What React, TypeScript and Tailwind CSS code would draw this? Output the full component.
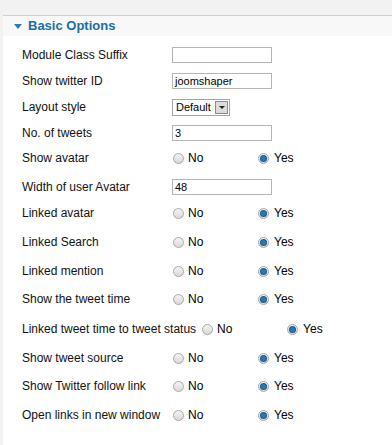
import React from "react";

type Row = {
  label: string;
  kind: "text" | "select" | "radio";
  value?: string;
  gap: string;
};

const rows: Row[] = [
  { label: "Module Class Suffix", kind: "text", value: "", gap: "mt-0" },
  { label: "Show twitter ID", kind: "text", value: "joomshaper", gap: "mt-[10px]" },
  { label: "Layout style", kind: "select", gap: "mt-[10px]" },
  { label: "No. of tweets", kind: "text", value: "3", gap: "mt-[10px]" },
  { label: "Show avatar", kind: "radio", gap: "mt-[9px]" },
  { label: "Width of user Avatar", kind: "text", value: "48", gap: "mt-[13px]" },
  { label: "Linked avatar", kind: "radio", gap: "mt-[10px]" },
  { label: "Linked Search", kind: "radio", gap: "mt-[13px]" },
  { label: "Linked mention", kind: "radio", gap: "mt-[13px]" },
  { label: "Show the tweet time", kind: "radio", gap: "mt-[12px]" },
  { label: "Linked tweet time to tweet status", kind: "radio", gap: "mt-[14px]" },
  { label: "Show tweet source", kind: "radio", gap: "mt-[13px]" },
  { label: "Show Twitter follow link", kind: "radio", gap: "mt-[12px]" },
  { label: "Open links in new window", kind: "radio", gap: "mt-[13px]" },
];

const Radio: React.FC<{ checked?: boolean }> = ({ checked }) => (
  <span className="ml-[1px] w-[11px] h-[11px] rounded-full border border-[#a8a8a8] bg-gradient-to-b from-[#f4f4f4] to-[#d9d9d9] flex items-center justify-center shrink-0">
    {checked && <span className="w-[5px] h-[5px] rounded-full bg-[#2b78b0] ring-1 ring-[#1d5a86]" />}
  </span>
);

const Field: React.FC<{ row: Row }> = ({ row }) => {
  if (row.kind === "text") {
    return (
      <div className="w-[100px] h-[16px] border border-[#b5b5b5] bg-white pl-[2px] text-[11px] leading-[14px] text-black">
        {row.value}
      </div>
    );
  }
  if (row.kind === "select") {
    return (
      <div className="w-[58px] h-[17px] border border-[#a5a5a5] bg-white flex items-center justify-between text-[11px] text-black">
        <span className="pl-[3px] leading-[15px]">Default</span>
        <span className="w-[13px] h-[13px] mr-[1px] bg-[#dcdcdc] border border-[#8c8c8c] flex items-center justify-center">
          <span className="w-0 h-0 border-l-[3px] border-r-[3px] border-t-[3px] border-l-transparent border-r-transparent border-t-[#222]" />
        </span>
      </div>
    );
  }
  return (
    <div className="flex items-center text-[12px] text-black">
      <div className="w-[85px] flex items-center">
        <Radio />
        <span className="ml-[4px]">No</span>
      </div>
      <div className="flex items-center">
        <Radio checked />
        <span className="ml-[5px]">Yes</span>
      </div>
    </div>
  );
};

const App: React.FC = () => {
  return (
    <div
      className="w-[392px] h-[445px] bg-[#f2f2f2] pt-[15px] pl-[3px] overflow-hidden"
      style={{ fontFamily: '"Liberation Sans", Arial, sans-serif' }}
    >
      <div className="h-full bg-white border-t border-[#cfcfcf]">
        <div className="h-[20px] bg-[#f8f8f8] flex items-center pl-[11px]">
          <span className="w-0 h-0 border-l-[4px] border-r-[4px] border-t-[5px] border-l-transparent border-r-transparent border-t-[#2a7ab8]" />
          <span className="ml-[6px] text-[13px] font-bold text-[#1c6ea6]">Basic Options</span>
        </div>
        <div className="flex flex-col pt-[11px] pl-[19px]">
          {rows.map((row) => (
            <div key={row.label} className={`${row.gap} h-[16px] flex items-center`}>
              <div className="min-w-[150px] pr-[5px] text-[12px] text-[#111] whitespace-nowrap">
                {row.label}
              </div>
              <Field row={row} />
            </div>
          ))}
        </div>
      </div>
    </div>
  );
};

export default App;
